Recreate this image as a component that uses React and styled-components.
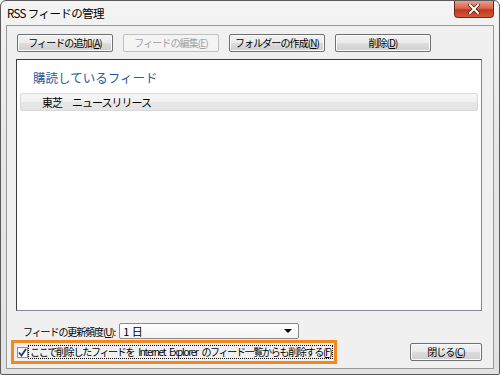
import React from 'react';
import styled, { createGlobalStyle } from 'styled-components';

const Global = createGlobalStyle`
  html, body { margin: 0; padding: 0; background: #ffffff; }
  body { font-family: "Noto Sans CJK JP", "Noto Sans", sans-serif; }
`;

const Frame = styled.div`
  width: 500px;
  height: 375px;
  box-sizing: border-box;
  border: 1px solid #5a5a5a;
  border-radius: 6px 6px 2px 2px;
  background: linear-gradient(180deg, #f4f4f4 0%, #e6e6e6 40%, #e2e2e2 100%);
  display: flex;
  flex-direction: column;
  padding: 0 5px 5px 5px;
  overflow: hidden;
`;

const TitleBar = styled.div`
  height: 24px;
  display: flex;
  align-items: flex-start;
  justify-content: space-between;
`;

const Title = styled.div`
  font-size: 11.5px;
  letter-spacing: -0.6px;
  color: #000;
  padding: 4px 0 0 1px;
  line-height: 16px;
`;

const CloseBtn = styled.div`
  width: 40px;
  height: 17px;
  box-sizing: border-box;
  border: 1px solid #6b2a1e;
  border-top: none;
  border-radius: 0 0 4px 4px;
  background: linear-gradient(180deg, #e8a08e 0%, #d8664e 45%, #c4371c 55%, #d2583a 100%);
  display: flex;
  align-items: center;
  justify-content: center;
`;

const Client = styled.div`
  flex: 1;
  background: #f0f0f0;
  border: 1px solid #9a9a9a;
  display: flex;
  flex-direction: column;
  padding: 8px 11px 4px 9px;
`;

const Toolbar = styled.div`
  display: flex;
  gap: 10px;
  padding-left: 1px;
`;

const Button = styled.button`
  width: ${p => p.$w || 96}px;
  height: 18px;
  padding: 0;
  box-sizing: border-box;
  font-family: "Noto Sans CJK JP", sans-serif;
  font-size: 10px;
  letter-spacing: -0.9px;
  line-height: 14px;
  white-space: nowrap;
  color: ${p => (p.disabled ? '#a0a0a0' : '#000')};
  border: 1px solid ${p => (p.disabled ? '#c0c0c0' : '#707070')};
  border-radius: 2px;
  background: ${p =>
    p.disabled
      ? '#f4f4f4'
      : 'linear-gradient(180deg, #f2f2f2 0%, #ebebeb 49%, #dddddd 50%, #cfcfcf 100%)'};
  box-shadow: inset 0 0 0 1px ${p => (p.disabled ? '#f4f4f4' : '#fbfbfb')};
`;

const List = styled.div`
  flex: 1;
  margin-top: 7px;
  background: #fff;
  border: 1px solid #828790;
  border-top-color: #3c3c3c;
  border-left-color: #3c3c3c;
  padding: 9px 3px 0 3px;
`;

const GroupHeader = styled.div`
  color: #1e5b9e;
  font-size: 12.5px;
  line-height: 18px;
  padding-left: 13px;
  margin-bottom: 6px;
`;

const Row = styled.div`
  height: 18px;
  box-sizing: border-box;
  border: 1px solid #d9d9d9;
  border-radius: 2px;
  background: linear-gradient(180deg, #f6f6f6 0%, #f1f1f1 50%, #e6e6e6 51%, #e4e4e4 100%);
  font-size: 11px;
  letter-spacing: -1px;
  line-height: 16px;
  padding-left: 21px;
  color: #000;
  white-space: pre;
`;

const FreqRow = styled.div`
  display: flex;
  align-items: center;
  margin-top: 12px;
  padding-left: 7px;
  gap: 4px;
  font-size: 10px;
  letter-spacing: -1.1px;
  white-space: nowrap;
`;

const Select = styled.div`
  width: 180px;
  height: 16px;
  box-sizing: border-box;
  border: 1px solid #8a8a8a;
  border-radius: 2px;
  background: linear-gradient(180deg, #ffffff 0%, #f3f3f3 100%);
  display: flex;
  align-items: center;
  justify-content: space-between;
  padding: 0 6px 0 3px;
  font-size: 11px;
  letter-spacing: 0;
`;

const Arrow = styled.div`
  width: 0;
  height: 0;
  border-left: 4px solid transparent;
  border-right: 4px solid transparent;
  border-top: 4px solid #000;
`;

const BottomRow = styled.div`
  display: flex;
  align-items: center;
  justify-content: space-between;
  margin-top: 1px;
  margin-left: -5px;
`;

const Highlight = styled.div`
  border: 3px solid #f7861c;
  display: flex;
  align-items: center;
  gap: 1px;
  padding: 2px 2px 2px 3px;
  height: 14px;
`;

const Check = styled.div`
  width: 11px;
  height: 11px;
  box-sizing: border-box;
  border: 1px solid #8e8f8f;
  background: linear-gradient(180deg, #f4f4f4, #ffffff);
  display: flex;
  align-items: center;
  justify-content: center;
`;

const CheckLabel = styled.span`
  font-size: 10px;
  line-height: 12px;
  outline: 1px dotted #000;
  padding: 0 1px;
  white-space: nowrap;
  letter-spacing: -1.3px;
  word-spacing: 3px;
`;

const Underlined = styled.span`
  text-decoration: underline;
`;

export default function App() {
  return (
    <>
      <Global />
      <Frame>
        <TitleBar>
          <Title>RSS フィードの管理</Title>
          <CloseBtn>
            <svg width="12" height="10" viewBox="0 0 12 10">
              <path d="M2 1 L10 9 M10 1 L2 9" stroke="#4a1a10" strokeWidth="3.4" strokeLinecap="square" />
              <path d="M2 1 L10 9 M10 1 L2 9" stroke="#ffffff" strokeWidth="2" strokeLinecap="square" />
            </svg>
          </CloseBtn>
        </TitleBar>
        <Client>
          <Toolbar>
            <Button>フィードの追加(<Underlined>A</Underlined>)</Button>
            <Button disabled>フィードの編集(<Underlined>E</Underlined>)</Button>
            <Button>フォルダーの作成(<Underlined>N</Underlined>)</Button>
            <Button>削除(<Underlined>D</Underlined>)</Button>
          </Toolbar>
          <List>
            <GroupHeader>購読しているフィード</GroupHeader>
            <Row>東芝　ニュースリリース</Row>
          </List>
          <FreqRow>
            <span>フィードの更新頻度(<Underlined>U</Underlined>):</span>
            <Select>
              <span>1 日</span>
              <Arrow />
            </Select>
          </FreqRow>
          <BottomRow>
            <Highlight>
              <Check>
                <svg width="9" height="9" viewBox="0 0 9 9">
                  <path d="M1 4.5 L3.5 7.5 L8 1" stroke="#1c3a8c" strokeWidth="1.8" fill="none" />
                </svg>
              </Check>
              <CheckLabel>
                ここで削除したフィードを Internet Explorer のフィード一覧からも削除する(<Underlined>F</Underlined>)
              </CheckLabel>
            </Highlight>
            <Button $w={72}>閉じる(<Underlined>C</Underlined>)</Button>
          </BottomRow>
        </Client>
      </Frame>
    </>
  );
}
